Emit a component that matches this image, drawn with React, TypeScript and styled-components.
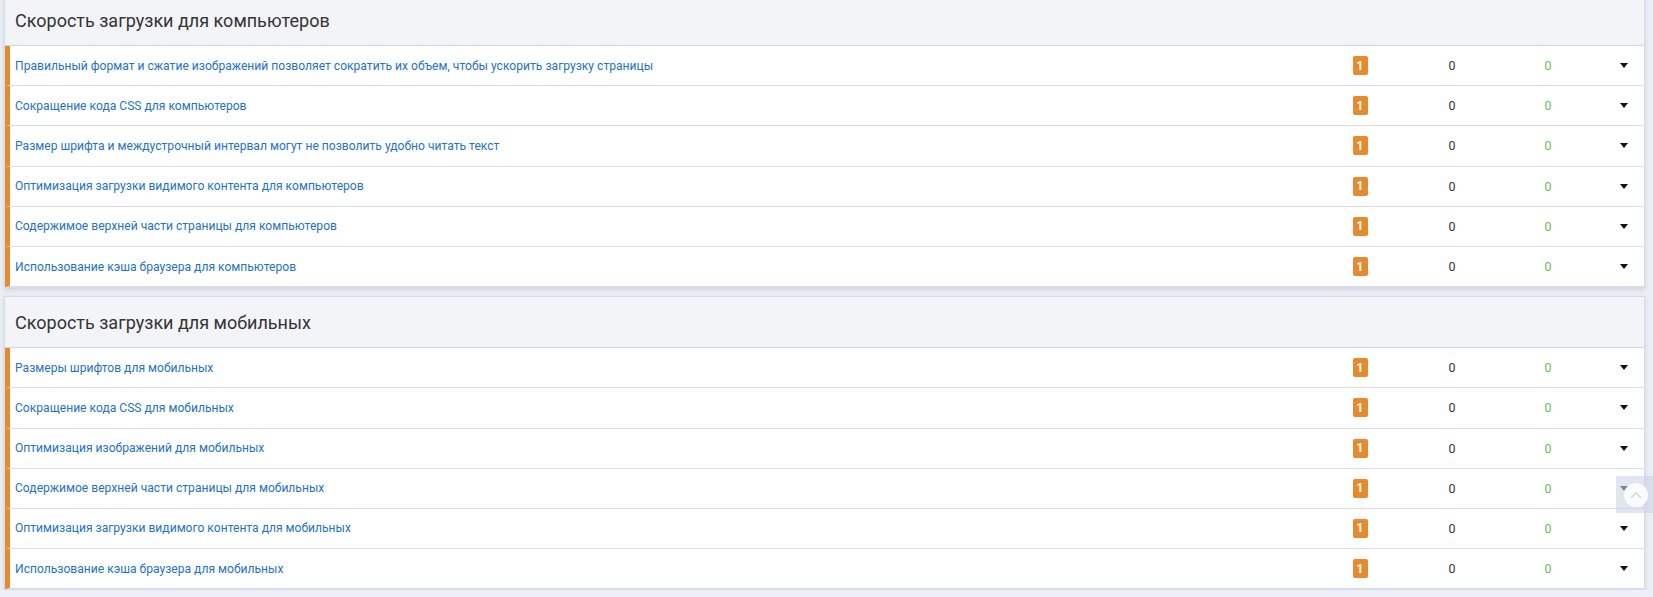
import styled, { createGlobalStyle } from "styled-components";

const GlobalStyle = createGlobalStyle`
  html, body {
    margin: 0;
    padding: 0;
    background: #eceff5;
    font-family: Roboto, "Noto Sans", Arial, sans-serif;
    overflow: hidden;
  }
`;

const Page = styled.div`
  padding: 0 8px 0 4px;
  margin-top: -6px;
  display: flex;
  flex-direction: column;
  gap: 8px;
`;

const Section = styled.section`
  background: #fff;
  border: 1px solid #d6dbe7;
  box-shadow: 0 2px 5px rgba(120, 130, 160, 0.25);
`;

const SectionHeader = styled.h2`
  margin: 0;
  height: 50px;
  display: flex;
  align-items: center;
  padding-left: 10px;
  background: #f3f4f8;
  border-bottom: 1px solid #cfd6e4;
  font-size: 18px;
  font-weight: 400;
  color: #333;
`;

const Row = styled.div`
  display: grid;
  grid-template-columns: 1fr 104px 80px 112px 40px;
  align-items: center;
  height: 39.2px;
  border-left: 5px solid #e68a2e;
  border-bottom: 1px solid #d8dde8;
  padding-left: 5px;
`;

const Title = styled.a`
  color: #1f72c4;
  font-size: 12.1px;
  text-decoration: none;
  cursor: pointer;
`;

const Cell = styled.div<{ $tone?: "green" }>`
  display: flex;
  justify-content: center;
  align-items: center;
  font-size: 12.5px;
  color: ${(p) => (p.$tone === "green" ? "#6cbd4f" : "#333")};
`;

const Badge = styled.span`
  display: inline-flex;
  align-items: center;
  justify-content: center;
  width: 15px;
  height: 19px;
  border-radius: 2px;
  background: #e68a2e;
  color: #fff;
  font-size: 12px;
  font-weight: 700;
`;

const Caret = styled.span`
  width: 0;
  height: 0;
  border-left: 4.5px solid transparent;
  border-right: 4.5px solid transparent;
  border-top: 5px solid #111;
`;

const ScrollTop = styled.button`
  position: fixed;
  left: 1616px;
  top: 476px;
  width: 40px;
  height: 37px;
  padding: 0;
  border: none;
  background: rgba(205, 212, 228, 0.6);
  display: flex;
  align-items: center;
  justify-content: center;
  cursor: pointer;
`;

const ScrollCircle = styled.span`
  width: 24px;
  height: 24px;
  border-radius: 50%;
  background: rgba(255, 255, 255, 0.85);
  display: flex;
  align-items: center;
  justify-content: center;
`;

const desktop = [
  "Правильный формат и сжатие изображений позволяет сократить их объем, чтобы ускорить загрузку страницы",
  "Сокращение кода CSS для компьютеров",
  "Размер шрифта и междустрочный интервал могут не позволить удобно читать текст",
  "Оптимизация загрузки видимого контента для компьютеров",
  "Содержимое верхней части страницы для компьютеров",
  "Использование кэша браузера для компьютеров",
];

const mobile = [
  "Размеры шрифтов для мобильных",
  "Сокращение кода CSS для мобильных",
  "Оптимизация изображений для мобильных",
  "Содержимое верхней части страницы для мобильных",
  "Оптимизация загрузки видимого контента для мобильных",
  "Использование кэша браузера для мобильных",
];

const CheckRow = ({ title }: { title: string }) => (
  <Row>
    <Title>{title}</Title>
    <Cell>
      <Badge>1</Badge>
    </Cell>
    <Cell>0</Cell>
    <Cell $tone="green">0</Cell>
    <Cell>
      <Caret />
    </Cell>
  </Row>
);

const App = () => {
  return (
    <>
      <GlobalStyle />
      <Page>
        <Section>
          <SectionHeader>Скорость загрузки для компьютеров</SectionHeader>
          {desktop.map((t) => (
            <CheckRow key={t} title={t} />
          ))}
        </Section>
        <Section>
          <SectionHeader>Скорость загрузки для мобильных</SectionHeader>
          {mobile.map((t) => (
            <CheckRow key={t} title={t} />
          ))}
        </Section>
      </Page>
      <ScrollTop aria-label="Наверх">
        <ScrollCircle>
          <svg width="12" height="8" viewBox="0 0 12 8">
            <path d="M1 7 L6 2 L11 7" fill="none" stroke="#d3d8e4" strokeWidth="1.6" />
          </svg>
        </ScrollCircle>
      </ScrollTop>
    </>
  );
};

export default App;
